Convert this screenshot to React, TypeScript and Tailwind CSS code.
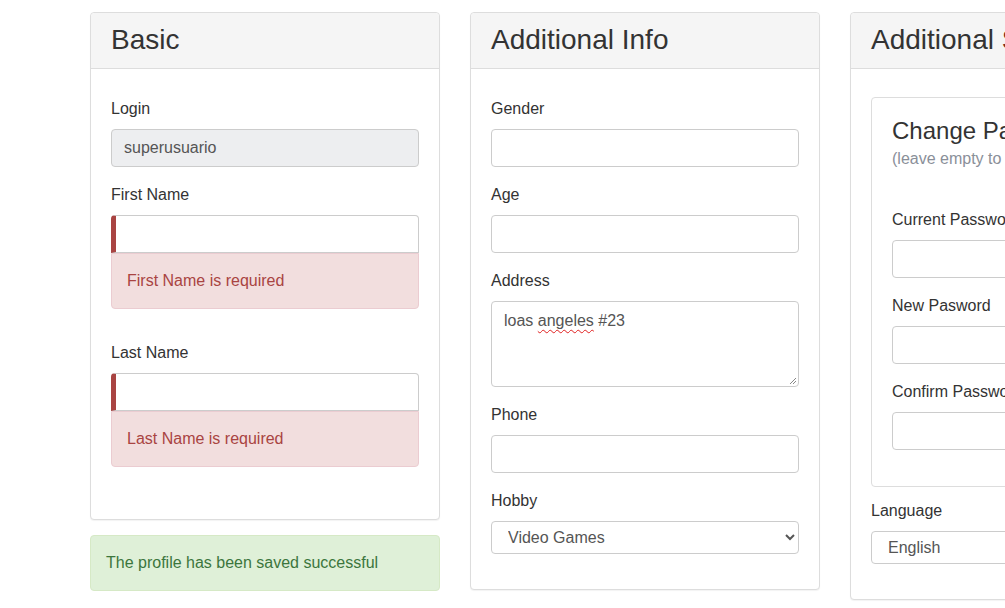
import React from 'react';

const font = { fontFamily: '"Liberation Sans", Arial, sans-serif' };

const Label = ({ children }: { children: React.ReactNode }) => (
  <label className="block text-[16px] leading-[23px] text-[#333] mb-[9px]">{children}</label>
);

const Input = ({ value = '', error = false, disabled = false }: { value?: string; error?: boolean; disabled?: boolean }) => (
  <div
    className={
      'h-[38px] w-full rounded-[4px] border border-[#ccc] flex items-center px-3 text-[16px] text-[#555] ' +
      (disabled ? 'bg-[#edeef0] ' : 'bg-white ') +
      (error ? 'border-l-[5px] border-l-[#a94442] rounded-b-none' : '')
    }
  >
    {value}
  </div>
);

const ErrorAlert = ({ text }: { text: string }) => (
  <div className="h-[56px] flex items-center px-[15px] bg-[#f2dede] border border-[#ebccd1] rounded-b-[4px] text-[16px] text-[#a94442]">
    {text}
  </div>
);

const Select = ({ value }: { value: string }) => (
  <select
    defaultValue={value}
    className="h-[33px] w-full rounded-[4px] border border-[#ccc] bg-white pl-3 pr-1 text-[16px] text-[#555]"
    style={font}
  >
    <option>{value}</option>
  </select>
);

const Panel = ({ title, accent, children }: { title: string; accent?: string; children: React.ReactNode }) => (
  <div className="w-[350px] shrink-0 self-start rounded-[4px] border border-[#ddd] bg-white shadow-[0_1px_1px_rgba(0,0,0,0.05)]">
    <div className="h-[56px] flex items-center px-5 bg-[#f5f5f5] border-b border-[#ddd] rounded-t-[4px] whitespace-nowrap">
      <h2 className="text-[28px] leading-[31px] text-[#333] -mt-[2px]">
        {title}
        {accent && <span className="text-[#7a2a20]"> {accent}</span>}
      </h2>
    </div>
    <div className="px-5">{children}</div>
  </div>
);

export default function App() {
  return (
    <div className="w-full h-[608px] overflow-hidden bg-white" style={font}>
      <div className="flex gap-[30px] pl-[90px] pt-3 w-[1400px]">
        {/* Basic */}
        <div className="w-[350px] shrink-0">
          <Panel title="Basic">
            <div className="pt-[28px] pb-[52px]">
              <div className="mb-4">
                <Label>Login</Label>
                <Input value="superusuario" disabled />
              </div>
              <div className="mb-[32px]">
                <Label>First Name</Label>
                <Input error />
                <ErrorAlert text="First Name is required" />
              </div>
              <div>
                <Label>Last Name</Label>
                <Input error />
                <ErrorAlert text="Last Name is required" />
              </div>
            </div>
          </Panel>
          <div className="mt-[15px] h-[56px] flex items-center px-[15px] bg-[#dff0d8] border border-[#d6e9c6] rounded-[4px] text-[16px] text-[#3c763d]">
            The profile has been saved successful
          </div>
        </div>

        {/* Additional Info */}
        <Panel title="Additional Info">
          <div className="pt-[28px] pb-[35px]">
            <div className="mb-4">
              <Label>Gender</Label>
              <Input />
            </div>
            <div className="mb-4">
              <Label>Age</Label>
              <Input />
            </div>
            <div className="mb-4">
              <Label>Address</Label>
              <div className="relative h-[86px] rounded-[4px] border border-[#ccc] px-3 pt-[8px] text-[16px] leading-[22px] text-[#555]">
                loas <span className="underline decoration-wavy decoration-[#e02020] decoration-1 underline-offset-[3px]">angeles</span> #23
                <svg className="absolute right-[1px] bottom-[1px]" width="8" height="8" viewBox="0 0 8 8">
                  <path d="M7 1L1 7M7 4L4 7" stroke="#888" strokeWidth="1" />
                </svg>
              </div>
            </div>
            <div className="mb-4">
              <Label>Phone</Label>
              <Input />
            </div>
            <div>
              <Label>Hobby</Label>
              <Select value="Video Games" />
            </div>
          </div>
        </Panel>

        {/* Additional Settings */}
        <Panel title="Additional" accent="Settings">
          <div className="pt-[28px] pb-[35px]">
            <div className="rounded-[4px] border border-[#ddd] px-5 pt-5 pb-[36px]">
              <h3 className="text-[24px] leading-[26px] text-[#333] whitespace-nowrap">Change Password</h3>
              <p className="mt-[3px] text-[16px] leading-[23px] text-[#8a8f99] whitespace-nowrap">
                (leave empty to keep current password)
              </p>
              <div className="mt-[38px] mb-4">
                <Label>Current Password</Label>
                <Input />
              </div>
              <div className="mb-4">
                <Label>New Pasword</Label>
                <Input />
              </div>
              <div>
                <Label>Confirm Password</Label>
                <Input />
              </div>
            </div>
            <div className="mt-[12px]">
              <Label>Language</Label>
              <Select value="English" />
            </div>
          </div>
        </Panel>
      </div>
    </div>
  );
}
